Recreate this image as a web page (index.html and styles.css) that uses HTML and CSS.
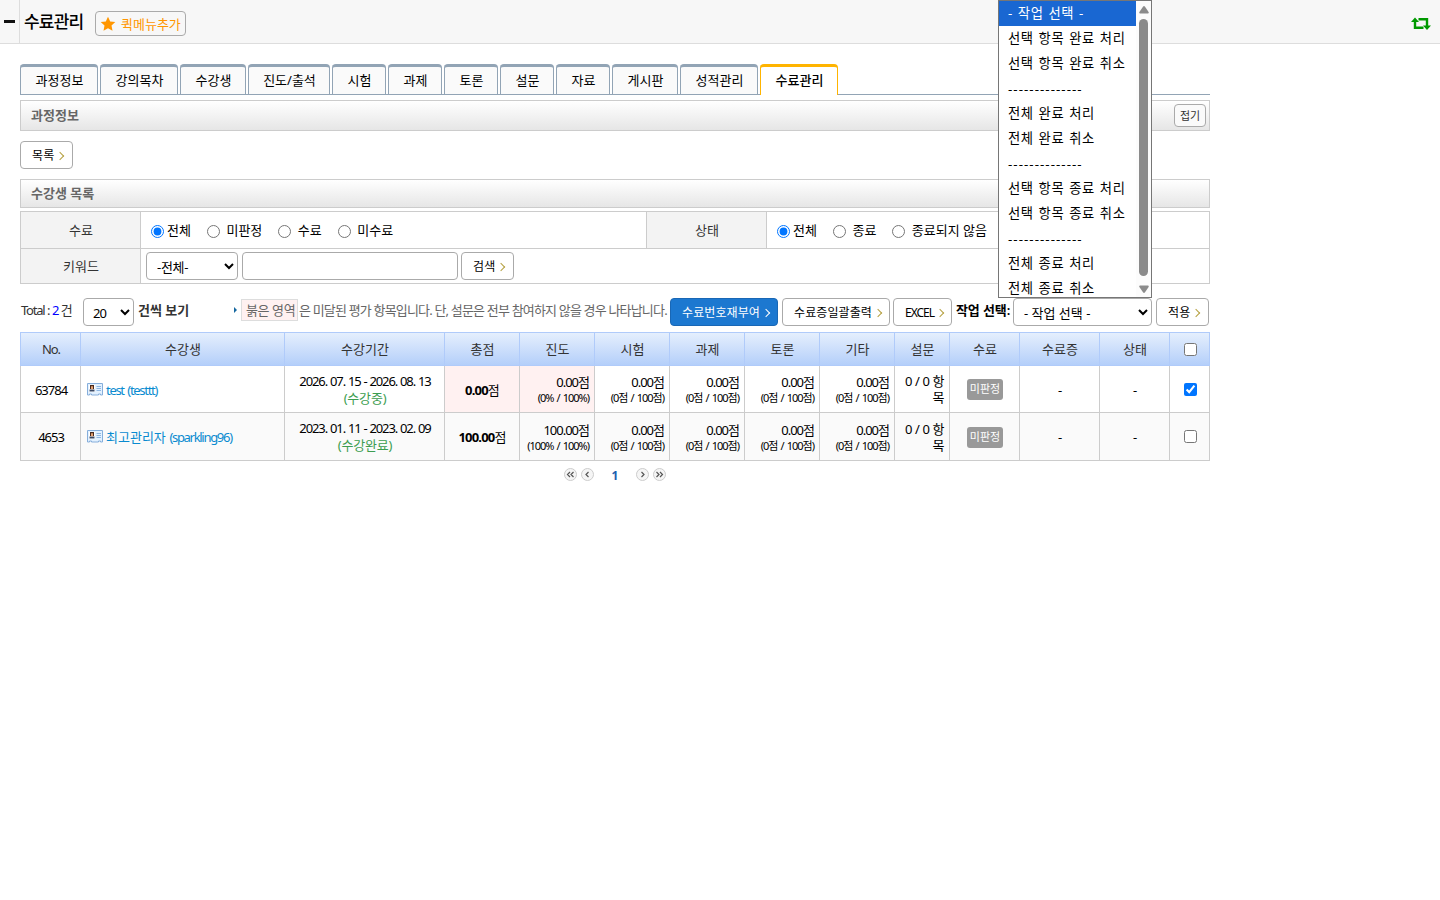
FILE: index.html
```html
<!DOCTYPE html>
<html lang="ko">
<head>
  <meta charset="utf-8">
  <title>수료관리</title>
  <link rel="stylesheet" href="styles.css">
</head>
<body>
  <header class="top">
    <div class="top-toggle"><span></span></div>
    <h1>수료관리</h1>
    <a class="quick">
      <svg width="16" height="16" viewBox="0 0 16 16"><path d="M8 .8l2.200 4.700 5.100.6-3.800 3.500 1 5.100L8 12.200l-4.500 2.500 1-5.100L.7 6.100l5.100-.6z" fill="#ff9600"/></svg>
      <span>퀵메뉴추가</span>
    </a>
    <svg class="refresh" width="20" height="14" viewBox="0 0 20 14"><path d="M4 3v7.800H12.500M7.500 2.200h8.500V10" fill="none" stroke="#090" stroke-width="2.400"/><path d="M0 5L4 .5l4 4.500zM12 8.500h8L16 13z" fill="#090"/></svg>
  </header>

  <main class="content">
    <nav class="tabs">
      <a>과정정보</a><a>강의목차</a><a>수강생</a><a>진도/출석</a><a>시험</a><a>과제</a><a>토론</a><a>설문</a><a>자료</a><a>게시판</a><a>성적관리</a><a class="on">수료관리</a>
    </nav>

    <div class="title title-info">과정정보 <button class="btn-fold">접기</button></div>
    <a class="btn btn-list">목록<i></i></a>
    <div class="title title-list">수강생 목록</div>

    <div class="filter">
      <div class="label">수료</div>
      <div class="field radios">
        <label><input type="radio" name="pass" checked>전체</label>
        <label><input type="radio" name="pass"><span>미판정</span></label>
        <label><input type="radio" name="pass"><span>수료</span></label>
        <label><input type="radio" name="pass"><span>미수료</span></label>
      </div>
      <div class="label">상태</div>
      <div class="field radios">
        <label><input type="radio" name="state" checked>전체</label>
        <label><input type="radio" name="state"><span>종료</span></label>
        <label><input type="radio" name="state"><span>종료되지 않음</span></label>
      </div>
      <div class="label">키워드</div>
      <div class="field keyword">
        <select class="sel-key"><option>-전체-</option></select>
        <input type="text" class="text">
        <a class="btn btn-search">검색<i></i></a>
      </div>
    </div>

    <div class="tools">
      <span class="total">Total : <em>2</em> 건</span>
      <select class="sel-count"><option>20</option></select>
      <b class="per">건씩 보기</b>
      <span class="notice"><i></i><span class="red">붉은 영역</span><span class="notice-text">은 미달된 평가 항목입니다. 단, 설문은 전부 참여하지 않을 경우 나타납니다.</span></span>
      <a class="btn btn-blue">수료번호재부여<i></i></a>
      <a class="btn btn-print">수료증일괄출력<i></i></a>
      <a class="btn btn-excel">EXCEL<i></i></a>
      <b class="job">작업 선택:</b>
      <div class="job-box">
        <select class="sel-job"><option>- 작업 선택 -</option></select>
        <div class="menu">
          <ul>
            <li class="on">- 작업 선택 -</li>
            <li>선택 항목 완료 처리</li>
            <li>선택 항목 완료 취소</li>
            <li class="line">--------------</li>
            <li>전체 완료 처리</li>
            <li>전체 완료 취소</li>
            <li class="line">--------------</li>
            <li>선택 항목 종료 처리</li>
            <li>선택 항목 종료 취소</li>
            <li class="line">--------------</li>
            <li>전체 종료 처리</li>
            <li>전체 종료 취소</li>
          </ul>
          <div class="bar">
            <svg width="10" height="8" viewBox="0 0 10 8"><path d="M4 .7q1-1.200 2 0L9.600 6q.6 1.400-.8 1.500H1.200Q-.2 7.400.4 6z" fill="#8b8b8b"/></svg>
            <span></span>
            <svg width="10" height="8" viewBox="0 0 10 8"><path d="M4 7.300q1 1.200 2 0L9.600 2Q10.200.6 8.800.5H1.200Q-.2.6.4 2z" fill="#8b8b8b"/></svg>
          </div>
        </div>
      </div>
      <a class="btn btn-apply">적용<i></i></a>
    </div>

    <table class="list">
      <colgroup>
        <col class="c-no"><col class="c-user"><col class="c-term">
        <col class="c-score"><col class="c-score"><col class="c-score"><col class="c-score"><col class="c-score"><col class="c-score">
        <col class="c-poll"><col class="c-pass"><col class="c-cert"><col class="c-state"><col class="c-check">
      </colgroup>
      <thead>
        <tr>
          <th>No.</th><th>수강생</th><th>수강기간</th><th>총점</th><th>진도</th><th>시험</th><th>과제</th><th>토론</th><th>기타</th><th>설문</th><th>수료</th><th>수료증</th><th>상태</th><th class="check"><input type="checkbox"></th>
        </tr>
      </thead>
      <tbody>
        <tr>
          <td>63784</td>
          <td class="user"><svg width="16" height="13" viewBox="0 0 16 13"><path d="M.5.5h15v11.500h-2V11h-2v1h-7v-1h-2v1h-2z" fill="#e3f1ff" stroke="#86aedb"/><path d="M2 2h6v7H2z" fill="#fff"/><path d="M3 2h4v4H3z" fill="#4a2b20"/><path d="M2.500 6.500h5v2h-5z" fill="#3b4a66"/><path d="M4 3.200h2v3H4z" fill="#e2a070"/><path d="M9.500 3.500h4.500M9.500 5.500h4.500M9.500 7.500h4.500" stroke="#8eb6e2"/></svg><span>test (testtt)</span></td>
          <td class="term">2026. 07. 15 - 2026. 08. 13<span>(수강중)</span></td>
          <td class="sum fail"><b>0.00</b>점</td>
          <td class="score fail">0.00점<small>(0% / 100%)</small></td>
          <td class="score">0.00점<small>(0점 / 100점)</small></td>
          <td class="score">0.00점<small>(0점 / 100점)</small></td>
          <td class="score">0.00점<small>(0점 / 100점)</small></td>
          <td class="score">0.00점<small>(0점 / 100점)</small></td>
          <td class="poll">0 / 0 항<br>목</td>
          <td><span class="badge">미판정</span></td>
          <td>-</td>
          <td>-</td>
          <td class="check"><input type="checkbox" checked></td>
        </tr>
        <tr>
          <td>4653</td>
          <td class="user"><svg width="16" height="13" viewBox="0 0 16 13"><path d="M.5.5h15v11.500h-2V11h-2v1h-7v-1h-2v1h-2z" fill="#e3f1ff" stroke="#86aedb"/><path d="M2 2h6v7H2z" fill="#fff"/><path d="M3 2h4v4H3z" fill="#4a2b20"/><path d="M2.500 6.500h5v2h-5z" fill="#3b4a66"/><path d="M4 3.200h2v3H4z" fill="#e2a070"/><path d="M9.500 3.500h4.500M9.500 5.500h4.500M9.500 7.500h4.500" stroke="#8eb6e2"/></svg><span><span class="ko">최고관리자</span> (sparkling96)</span></td>
          <td class="term">2023. 01. 11 - 2023. 02. 09<span>(수강완료)</span></td>
          <td class="sum"><b>100.00</b>점</td>
          <td class="score">100.00점<small>(100% / 100%)</small></td>
          <td class="score">0.00점<small>(0점 / 100점)</small></td>
          <td class="score">0.00점<small>(0점 / 100점)</small></td>
          <td class="score">0.00점<small>(0점 / 100점)</small></td>
          <td class="score">0.00점<small>(0점 / 100점)</small></td>
          <td class="poll">0 / 0 항<br>목</td>
          <td><span class="badge">미판정</span></td>
          <td>-</td>
          <td>-</td>
          <td class="check"><input type="checkbox"></td>
        </tr>
      </tbody>
    </table>

    <div class="pager">
      <a><svg width="9" height="7" viewBox="0 0 9 7"><path d="M4 1L1.500 3.500 4 6M7.500 1L5 3.500 7.500 6"/></svg></a>
      <a><svg width="5" height="7" viewBox="0 0 5 7"><path d="M3.500 1L1 3.500 3.500 6"/></svg></a>
      <b>1</b>
      <a><svg width="5" height="7" viewBox="0 0 5 7"><path d="M1.500 1L4 3.500 1.500 6"/></svg></a>
      <a><svg width="9" height="7" viewBox="0 0 9 7"><path d="M1.500 1L4 3.500 1.500 6M5 1l2.500 2.500L5 6"/></svg></a>
    </div>
  </main>
</body>
</html>
```
FILE: styles.css
```css
* {
  box-sizing: border-box;
}
body {
  margin: 0;
  background: #fff;
  color: #000;
  font: 13px/18px "Noto Sans", "Noto Sans CJK KR", sans-serif;
}
input, select, button {
  margin: 0;
  font: inherit;
}
i, em {
  font-style: normal;
}

/* top bar */
.top {
  display: flex;
  height: 44px;
  background: #f7f7f7;
  border-bottom: 1px solid #ddd;
}
.top-toggle {
  width: 20px;
  padding: 20px 0 0 4px;
  border-right: 1px solid #ddd;
}
.top-toggle span {
  display: block;
  width: 11px;
  height: 3px;
  background: #111;
}
.top h1 {
  width: 75px;
  margin: 0;
  padding-left: 4px;
  font-size: 17px;
  line-height: 44px;
  font-weight: 500;
  letter-spacing: -.8px;
  white-space: nowrap;
}
.quick {
  display: flex;
  align-items: center;
  width: 91px;
  height: 25px;
  margin-top: 11px;
  padding-left: 4px;
  border: 1px solid #aaa;
  border-radius: 4px;
  color: #ff9600;
  white-space: nowrap;
}
.quick span {
  margin-left: 5px;
}
.refresh {
  margin: 17px 9px 0 auto;
}

.content {
  width: 1190px;
  margin: 20px 0 0 20px;
}

/* tabs */
.tabs {
  display: grid;
  grid-template-columns: 78px 78px 66px 82px 54px 54px 54px 54px 54px 66px 78px 78px;
  gap: 2px;
  height: 31px;
  border-bottom: 1px solid #92a4b5;
}
.tabs a {
  height: 30px;
  padding-left: 1px;
  border: 1px solid #92a4b5;
  border-width: 3px 1px 0;
  border-radius: 4px 4px 0 0;
  background: #fafafa;
  text-align: center;
  line-height: 27px;
  white-space: nowrap;
}
.tabs .on {
  height: 31px;
  border-color: #ffb400;
  background: #fff;
  font-weight: 500;
}

.title {
  display: flex;
  align-items: center;
  justify-content: space-between;
  padding: 0 3px 1px 10px;
  border: 1px solid #ccc;
  background: linear-gradient(#fff, #e6e6e6);
  color: #666;
  font-weight: 600;
}
.title-info {
  height: 31px;
  margin: 5px 0 10px;
}
.title-list {
  height: 29px;
  margin: 10px 0 3px;
}
.btn-fold {
  width: 32px;
  height: 23px;
  margin-top: 1px;
  padding: 0;
  border: 1px solid #aaa;
  border-radius: 4px;
  background: #fafafa;
  color: #333;
  font-size: 11px;
  font-weight: 400;
  line-height: 20px;
}

/* buttons */
.btn {
  display: flex;
  align-items: center;
  height: 28px;
  padding: 1px 0 0 11px;
  border: 1px solid #aaa;
  border-radius: 4px;
  background: #fff;
  font-size: 12px;
  letter-spacing: .1px;
  white-space: nowrap;
}
.btn i {
  width: 6px;
  height: 6px;
  margin-left: 3px;
  border: solid #b5a040;
  border-width: 1.500px 1.500px 0 0;
  transform: rotate(45deg);
}
.btn-list {
  width: 53px;
}
.btn-search {
  width: 53px;
}
.btn-blue {
  width: 108px;
  background: #1c78d0;
  border-color: #1967b5;
  color: #fff;
}
.btn-blue i {
  border-color: #fff;
}
.btn-print {
  width: 108px;
}
.btn-excel {
  width: 59px;
  letter-spacing: -1px;
}
.btn-apply {
  width: 53px;
}

select, .text {
  height: 28px;
  border: 1px solid #aaa;
  border-radius: 4px;
  background: #fff;
  color: #000;
}

/* search form */
.filter {
  display: grid;
  grid-template-columns: 120px 506px 120px 443px;
  grid-template-rows: 37px 35px;
  border: solid #ccc;
  border-width: 1px 0 0 1px;
}
.filter > div {
  border: solid #ccc;
  border-width: 0 1px 1px 0;
}
.filter .label {
  padding-left: 1px;
  background: #f3f3f3;
  color: #333;
  text-align: center;
  line-height: 37px;
}
.filter .label:nth-child(5) {
  line-height: 35px;
}
.radios {
  display: flex;
  padding-left: 10px;
}
.radios label {
  display: flex;
  align-items: center;
  margin-right: 16px;
  white-space: nowrap;
}
.radios input {
  width: 13px;
  height: 13px;
  margin: 3px 3px 0 0;
}
.radios span {
  margin-left: 3.500px;
}
.keyword {
  grid-column: 2 / 5;
  display: flex;
  align-items: center;
  padding-left: 5px;
}
.sel-key {
  width: 92px;
  padding: 1px 0 0 6px;
  letter-spacing: -.3px;
}
.text {
  width: 216px;
  margin: 0 3px 0 4px;
}

/* list tools */
.tools {
  display: flex;
  height: 28px;
  margin: 14px 0 6px;
}
.total {
  width: 63px;
  padding: 3px 0 0 1px;
  color: #333;
  letter-spacing: -1.200px;
  word-spacing: .4px;
  white-space: nowrap;
}
.total em {
  color: #00f;
}
.sel-count {
  width: 51px;
  padding: 2px 0 0 5px;
  letter-spacing: -.9px;
}
.per {
  width: 99px;
  padding: 3px 0 0 4px;
  color: #333;
  font-weight: 600;
}
.notice {
  display: flex;
  width: 437px;
  padding-top: 1px;
  color: #666;
  white-space: nowrap;
}
.notice i {
  width: 3px;
  height: 6px;
  margin: 8px 4px 0 1px;
  border: solid transparent;
  border-width: 3px 0 3px 3px;
  border-left-color: #1668a0;
}
.red {
  width: 57px;
  height: 22px;
  padding: 1px 4px;
  border: 1px solid #ddd;
  background: #fff1f1;
  letter-spacing: -.4px;
}
.notice-text {
  margin-left: 1px;
  padding-top: 2px;
  letter-spacing: -.82px;
}
.btn-print {
  margin: 0 3px 0 4px;
}
.job {
  width: 61px;
  padding: 3px 0 0 4px;
  font-weight: 600;
  letter-spacing: -.1px;
  white-space: nowrap;
}
.job-box {
  position: relative;
  margin-right: 4px;
}
.sel-job {
  width: 139px;
  padding: 1px 0 0 6px;
}
.menu {
  position: absolute;
  right: 0;
  bottom: 28px;
  z-index: 2;
  display: flex;
  width: 154px;
  height: 298px;
  border: 1px solid #767676;
  background: #fff;
  overflow: hidden;
}
.menu ul {
  width: 137px;
  margin: 0;
  padding: 0;
  list-style: none;
}
.menu li {
  height: 25px;
  padding-left: 9px;
  font-size: 13.300px;
  line-height: 25px;
  letter-spacing: .6px;
  word-spacing: .9px;
  white-space: pre;
}
.menu .on {
  background: #1967d2;
  color: #fff;
}
.menu .line {
  line-height: 27px;
  letter-spacing: 1.050px;
}
.bar {
  display: flex;
  flex-direction: column;
  align-items: center;
  width: 15px;
  padding: 5px 0 4px;
  background: #fcfcfc;
}
.bar span {
  flex: 1;
  width: 9px;
  margin: 5px 0 9px;
  border-radius: 5px;
  background: #8b8b8b;
}

/* list */
.list {
  width: 1190px;
  table-layout: fixed;
  border-spacing: 0;
}
.c-no { width: 61px; }
.c-user { width: 204px; }
.c-term { width: 160px; }
.c-score { width: 75px; }
.c-poll { width: 55px; }
.c-pass { width: 70px; }
.c-cert { width: 80px; }
.c-state { width: 70px; }
.c-check { width: 40px; }
.list th, .list td {
  padding: 1px 5px 0 6px;
  border: solid #ccc;
  border-width: 0 1px 1px 0;
  text-align: center;
  line-height: 16px;
}
.list th {
  height: 34px;
  padding-top: 0;
  border-color: #b0cbfa;
  border-top-width: 1px;
  background: linear-gradient(#e5effd, #b4cffa);
  color: #333;
  font-weight: 400;
}
.list th:first-child, .list td:first-child {
  border-left-width: 1px;
  letter-spacing: -1px;
}
.list td {
  height: 47px;
}
.list tr:last-child td {
  height: 48px;
  background: #fafafa;
}
.list .check {
  padding: 0 0 0 2px;
}
.list input {
  display: block;
  width: 13px;
  height: 13px;
  margin: 0 auto;
}
.list .user {
  color: #0a8bd0;
  text-align: left;
  letter-spacing: -1.300px;
  word-spacing: 1.500px;
}
.user svg {
  margin-right: 3px;
  vertical-align: -1px;
}
.user .ko {
  letter-spacing: 0;
}
.list .term {
  padding-top: 0;
  letter-spacing: -1.100px;
  word-spacing: .6px;
}
.term span {
  display: block;
  padding-top: 1px;
  color: #3c9d50;
  letter-spacing: -.2px;
}
.list .sum {
  padding-right: 6px;
  letter-spacing: -.8px;
}
.list .score {
  padding: 2px 5px 0 0;
  text-align: right;
  letter-spacing: -1px;
}
.score small {
  display: block;
  font-size: 11px;
  letter-spacing: -1px;
  word-spacing: 1.200px;
}
.list .poll {
  padding-top: 0;
  text-align: right;
  letter-spacing: -.4px;
}
.list td.fail {
  background: #fff1f1;
}
.badge {
  display: inline-block;
  width: 36px;
  height: 21px;
  border-radius: 3px;
  background: #999;
  color: #fff;
  font-size: 11px;
  line-height: 20px;
  vertical-align: middle;
}

/* pager */
.pager {
  display: flex;
  justify-content: center;
  gap: 4px;
  height: 13px;
  margin-top: 7px;
}
.pager a {
  display: flex;
  align-items: center;
  justify-content: center;
  width: 13px;
  height: 13px;
  border: 1px solid #ccc;
  border-radius: 50%;
  background: #f5f5f5;
}
.pager svg {
  flex: none;
}
.pager path {
  fill: none;
  stroke: #555;
  stroke-width: 1.200;
}
.pager b {
  width: 34px;
  color: #1c60b0;
  font-size: 12px;
  line-height: 15px;
  text-align: center;
}
```
